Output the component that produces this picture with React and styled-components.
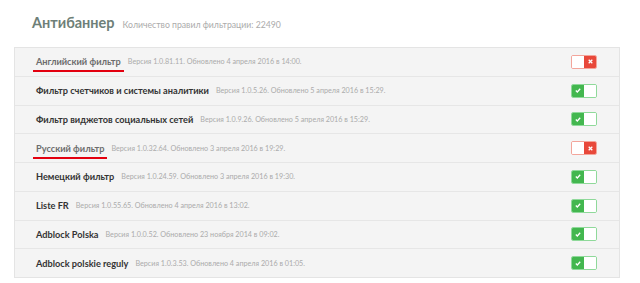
import React from "react";
import styled, { createGlobalStyle } from "styled-components";

const GlobalStyle = createGlobalStyle`
    body {
        margin: 0;
        background: #ffffff;
        font-family: Lato, "Open Sans", sans-serif;
    }
`;

const Page = styled.div`
    width: 640px;
    height: 283px;
    box-sizing: border-box;
    padding: 13px 20px 0 14px;
`;

const Header = styled.div`
    display: flex;
    align-items: baseline;
    gap: 8px;
    padding-left: 18px;
    height: 34px;
`;

const Title = styled.h1`
    margin: 0;
    font-size: 14.5px;
    font-weight: 700;
    color: #6e7f78;
    line-height: 20px;
`;

const Subtitle = styled.span`
    font-size: 8.7px;
    color: #ababab;
`;

const Panel = styled.div`
    background: #f4f4f4;
    border: 1px solid #e4e4e4;
`;

const Row = styled.div`
    display: flex;
    align-items: center;
    height: 27.75px;
    padding: 0 22px 0 21px;
    border-bottom: 1px solid #e6e6e6;

    &:last-child {
        border-bottom: none;
    }
`;

const Name = styled.span`
    font-size: 9.2px;
    font-weight: 700;
    color: ${p => (p.$off ? "#6d6d6d" : "#333333")};
    position: relative;

    &::after {
        content: "";
        display: ${p => (p.$off ? "block" : "none")};
        position: absolute;
        left: -3px;
        right: -3px;
        bottom: -5px;
        height: 2px;
        background: #e3000f;
    }
`;

const Version = styled.span`
    margin-left: 7px;
    font-size: 7.2px;
    color: #ababab;
    flex: 1;
`;

const Toggle = styled.div`
    display: flex;
    width: 26px;
    height: 14px;
    box-sizing: border-box;
    border-radius: 2px;
    overflow: hidden;
    border: 1px solid ${p => (p.$on ? "#8fd99a" : "#f3a59b")};
    background: #ffffff;
`;

const Half = styled.div`
    flex: 1;
    display: flex;
    align-items: center;
    justify-content: center;
    background: ${p => p.$color || "#ffffff"};
`;

const Check = () => (
    <svg width="6" height="5" viewBox="0 0 6 5">
        <path d="M0.8 2.6 L2.3 4 L5.2 0.8" fill="none" stroke="#fff" strokeWidth="1.3" />
    </svg>
);

const Cross = () => (
    <svg width="5" height="5" viewBox="0 0 5 5">
        <path d="M0.7 0.7 L4.3 4.3 M4.3 0.7 L0.7 4.3" fill="none" stroke="#fff" strokeWidth="1.3" />
    </svg>
);

const Switch = ({ on }) => (
    <Toggle $on={on}>
        {on ? (
            <>
                <Half $color="#43b74f"><Check /></Half>
                <Half />
            </>
        ) : (
            <>
                <Half />
                <Half $color="#e8483a"><Cross /></Half>
            </>
        )}
    </Toggle>
);

const filters = [
    { name: "Английский фильтр", version: "1.0.81.11", date: "4 апреля 2016 в 14:00", on: false },
    { name: "Фильтр счетчиков и системы аналитики", version: "1.0.5.26", date: "5 апреля 2016 в 15:29", on: true },
    { name: "Фильтр виджетов социальных сетей", version: "1.0.9.26", date: "5 апреля 2016 в 15:29", on: true },
    { name: "Русский фильтр", version: "1.0.32.64", date: "3 апреля 2016 в 19:29", on: false },
    { name: "Немецкий фильтр", version: "1.0.24.59", date: "3 апреля 2016 в 19:30", on: true },
    { name: "Liste FR", version: "1.0.55.65", date: "4 апреля 2016 в 13:02", on: true },
    { name: "Adblock Polska", version: "1.0.0.52", date: "23 ноября 2014 в 09:02", on: true },
    { name: "Adblock polskie reguly", version: "1.0.3.53", date: "4 апреля 2016 в 01:05", on: true },
];

export default function App() {
    return (
        <Page>
            <GlobalStyle />
            <Header>
                <Title>Антибаннер</Title>
                <Subtitle>Количество правил фильтрации: 22490</Subtitle>
            </Header>
            <Panel>
                {filters.map(f => (
                    <Row key={f.name}>
                        <Name $off={!f.on}>{f.name}</Name>
                        <Version>Версия {f.version}. Обновлено {f.date}.</Version>
                        <Switch on={f.on} />
                    </Row>
                ))}
            </Panel>
        </Page>
    );
}
